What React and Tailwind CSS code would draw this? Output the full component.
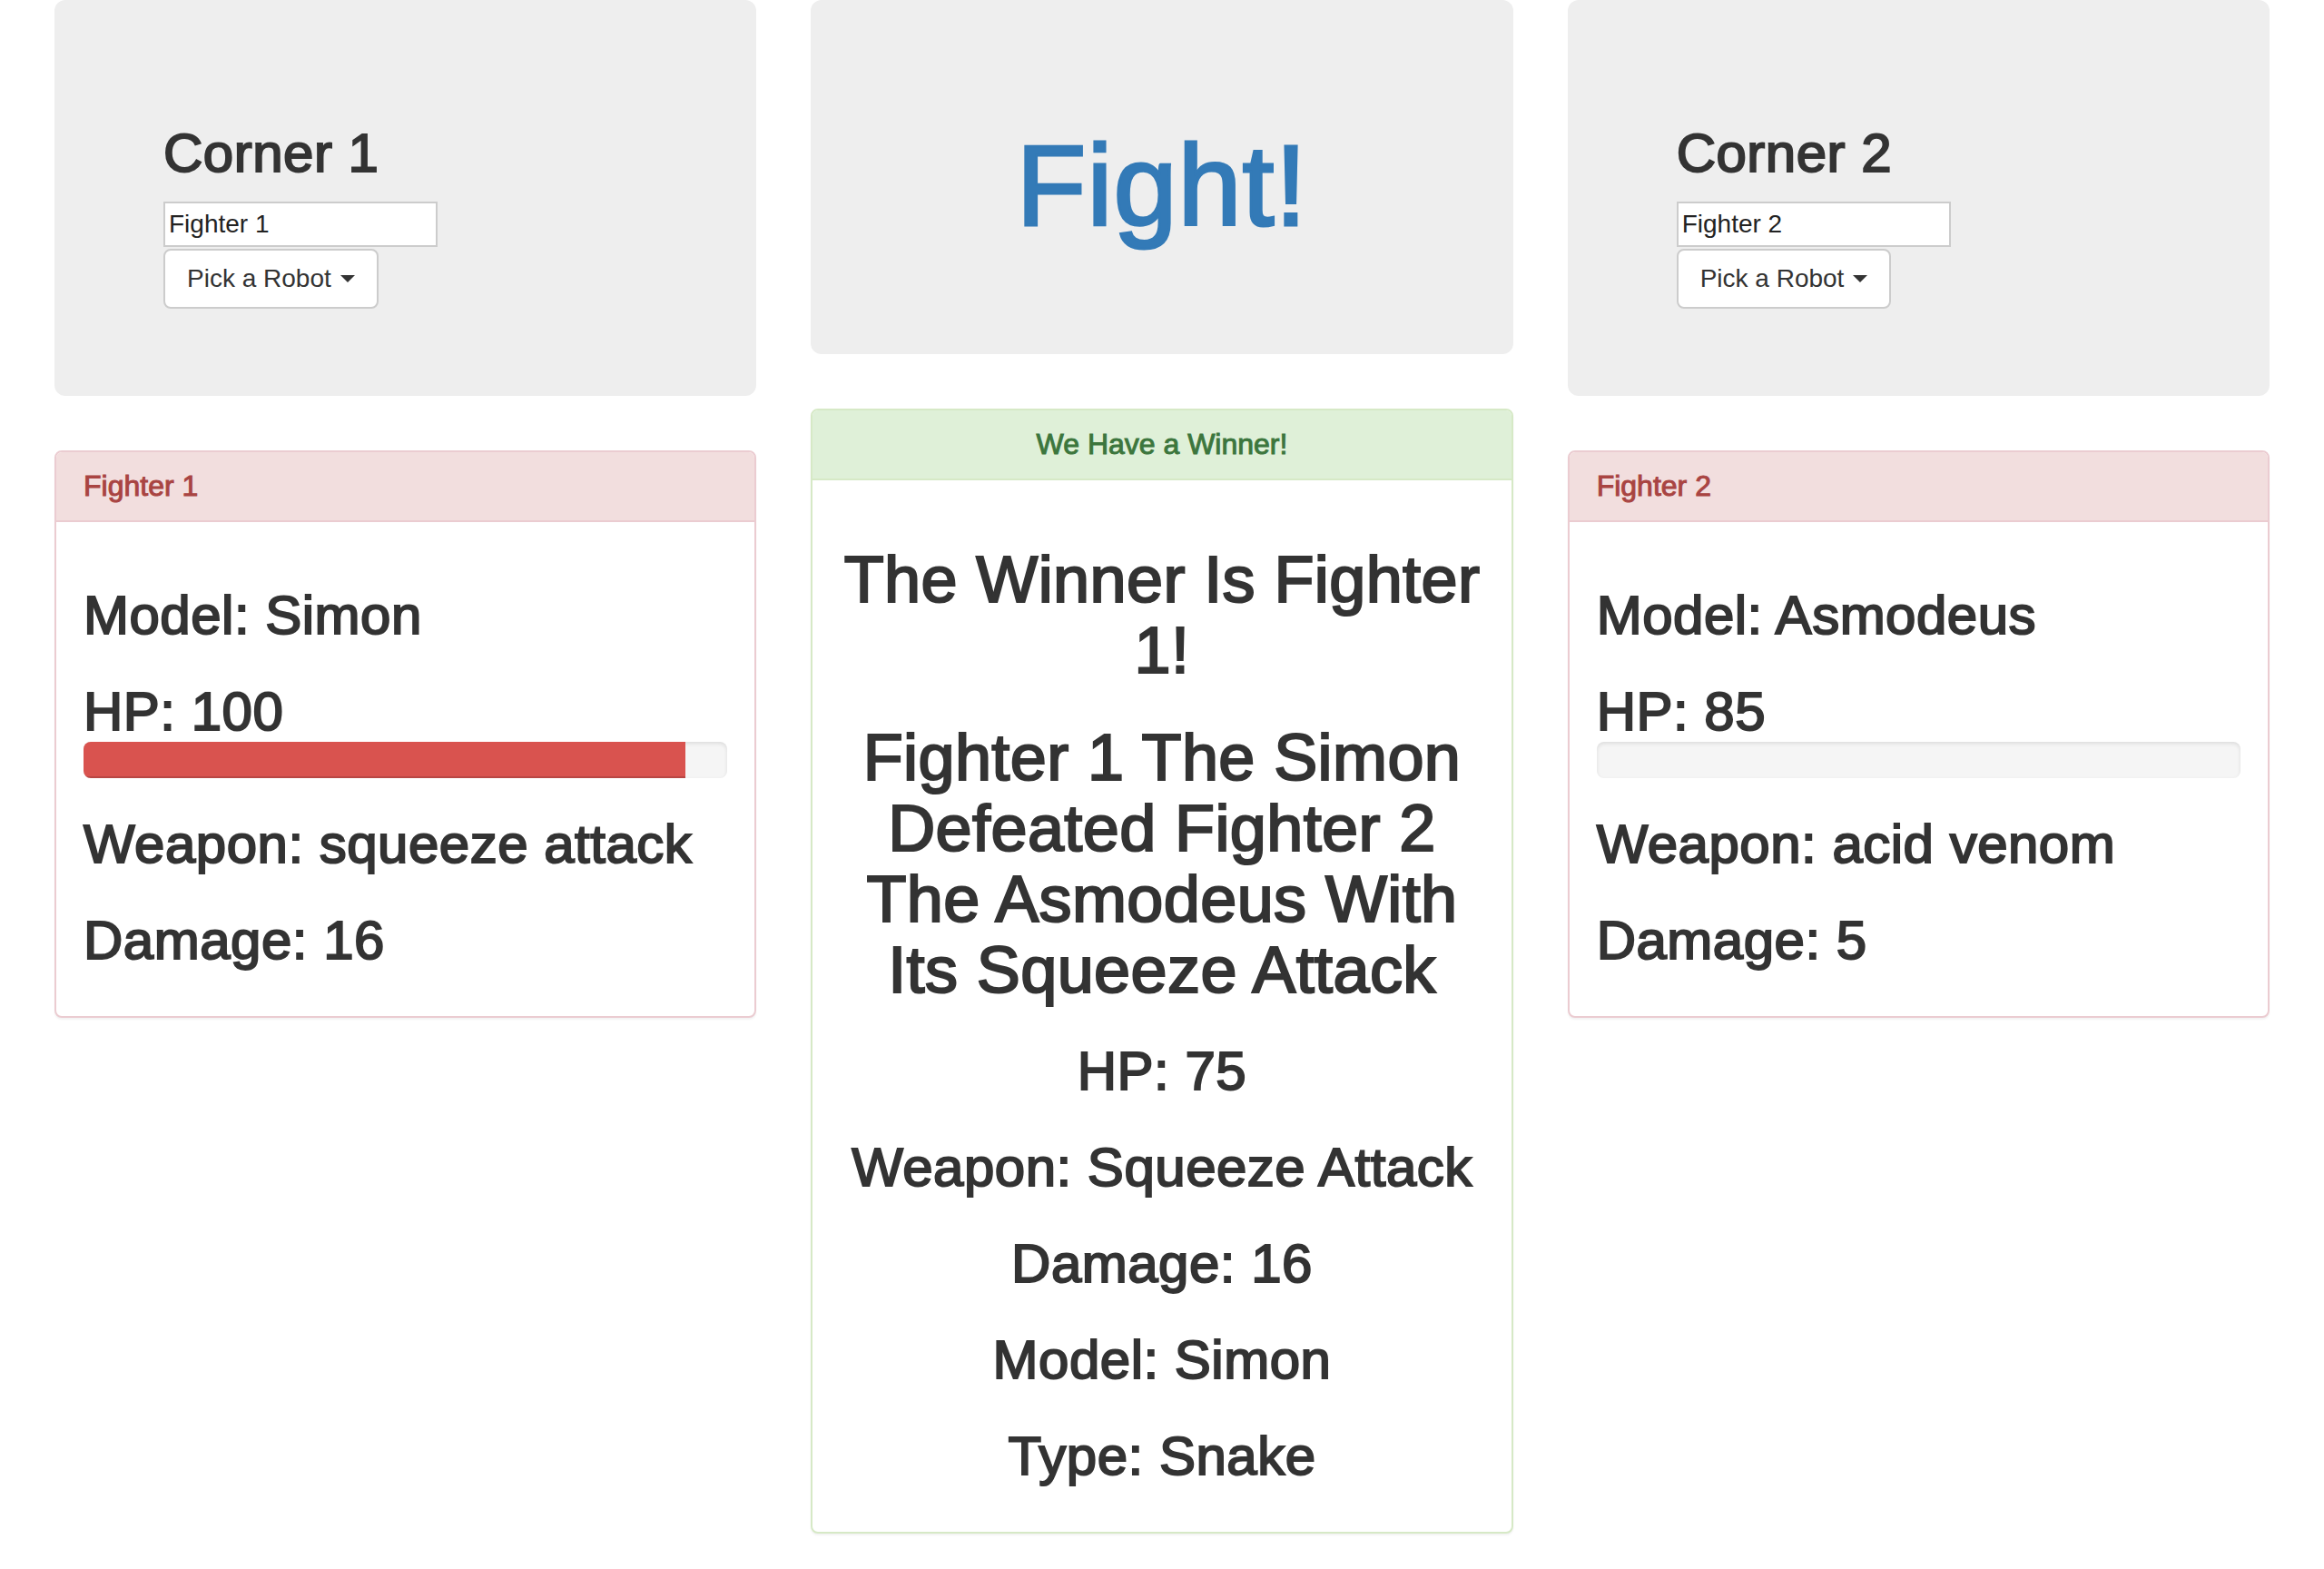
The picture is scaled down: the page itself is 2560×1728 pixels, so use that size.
import React from "react";

const fighters = [
  {
    corner: "Corner 1",
    name: "Fighter 1",
    model: "Simon",
    hp: 100,
    bar: 93.4,
    weapon: "squeeze attack",
    damage: 16,
  },
  {
    corner: "Corner 2",
    name: "Fighter 2",
    model: "Asmodeus",
    hp: 85,
    bar: 0,
    weapon: "acid venom",
    damage: 5,
  },
];

// bootstrap-ish heading sizes, doubled for the 2x screenshot
const h2 = "text-[60px] leading-[66px] font-normal tracking-[0.5px] [-webkit-text-stroke:2px_currentColor]";
const h1 = "text-[72px] leading-[78px] font-normal tracking-[0.4px] [-webkit-text-stroke:2.2px_currentColor]";
const title = "text-[32px] leading-[35px] font-normal [-webkit-text-stroke:1px_currentColor]";

const Corner = ({ fighter }) => (
  <div className="bg-[#eeeeee] rounded-[12px] px-[120px] py-[96px] mb-[60px]">
    <h2 className={`${h2} mt-[40px] mb-[20px]`}>{fighter.corner}</h2>
    <input
      type="text"
      defaultValue={fighter.name}
      className="block w-[302px] h-[50px] bg-white border-2 border-[#cccccc] px-[4px] text-[28px] text-[#222] outline-none"
    />
    <button
      type="button"
      className="mt-[2px] flex items-center h-[66px] px-[24px] bg-white border-2 border-[#cccccc] rounded-[8px] text-[28px] text-[#333]"
    >
      Pick a Robot
      <span className="ml-[10px] w-0 h-0 border-t-[8px] border-t-[#333] border-x-[8px] border-x-transparent" />
    </button>
  </div>
);

const FighterPanel = ({ fighter }) => (
  <div className="bg-white border-2 border-[#ebccd1] rounded-[8px] mb-[40px] shadow-[0_2px_2px_rgba(0,0,0,0.05)]">
    <div className="bg-[#f2dede] text-[#a94442] border-b-2 border-[#ebccd1] rounded-t-[6px] px-[30px] py-[20px]">
      <h3 className={title}>{fighter.name}</h3>
    </div>
    <div className="p-[30px]">
      <h2 className={`${h2} mt-[40px] mb-[20px]`}>Model: {fighter.model}</h2>
      <h2 className={`${h2} mt-[40px] mb-0`}>HP: {fighter.hp}</h2>
      <div className="h-[40px] mb-[40px] bg-[#f5f5f5] rounded-[8px] overflow-hidden shadow-[inset_0_2px_4px_rgba(0,0,0,0.1)]">
        <div
          className="h-full bg-[#d9534f] shadow-[inset_0_-2px_0_rgba(0,0,0,0.15)]"
          style={{ width: `${fighter.bar}%` }}
        />
      </div>
      <h2 className={`${h2} mt-[40px] mb-[20px]`}>Weapon: {fighter.weapon}</h2>
      <h2 className={`${h2} mt-[40px] mb-[20px]`}>Damage: {fighter.damage}</h2>
    </div>
  </div>
);

const WinnerPanel = () => (
  <div className="bg-white border-2 border-[#d6e9c6] rounded-[8px] mb-[40px] text-center shadow-[0_2px_2px_rgba(0,0,0,0.05)]">
    <div className="bg-[#dff0d8] text-[#3c763d] border-b-2 border-[#d6e9c6] rounded-t-[6px] px-[30px] py-[20px]">
      <h3 className={title}>We Have a Winner!</h3>
    </div>
    <div className="p-[30px]">
      <h1 className={`${h1} mt-[40px] mb-[20px]`}>The Winner Is Fighter 1!</h1>
      <h1 className={`${h1} mt-[40px] mb-[20px]`}>
        Fighter 1 The Simon Defeated Fighter 2 The Asmodeus With Its Squeeze Attack
      </h1>
      {["HP: 75", "Weapon: Squeeze Attack", "Damage: 16", "Model: Simon", "Type: Snake"].map((line) => (
        <h2 key={line} className={`${h2} mt-[40px] mb-[20px]`}>
          {line}
        </h2>
      ))}
    </div>
  </div>
);

const App = () => {
  return (
    <div className="min-h-screen bg-white px-[30px] text-[#333] font-['Liberation_Sans',Arial,Helvetica,sans-serif]">
      <div className="grid grid-cols-3">
        <div className="px-[30px]">
          <Corner fighter={fighters[0]} />
          <FighterPanel fighter={fighters[0]} />
        </div>
        <div className="px-[30px]">
          <div className="bg-[#eeeeee] rounded-[12px] px-[120px] py-[96px] mb-[60px] text-center">
            <h1 className="text-[126px] leading-[138px] font-normal tracking-[1px] text-[#337ab7] mt-[40px] mb-[20px] [-webkit-text-stroke:3px_currentColor]">
              Fight!
            </h1>
          </div>
          <WinnerPanel />
        </div>
        <div className="px-[30px]">
          <Corner fighter={fighters[1]} />
          <FighterPanel fighter={fighters[1]} />
        </div>
      </div>
    </div>
  );
};

export default App;
